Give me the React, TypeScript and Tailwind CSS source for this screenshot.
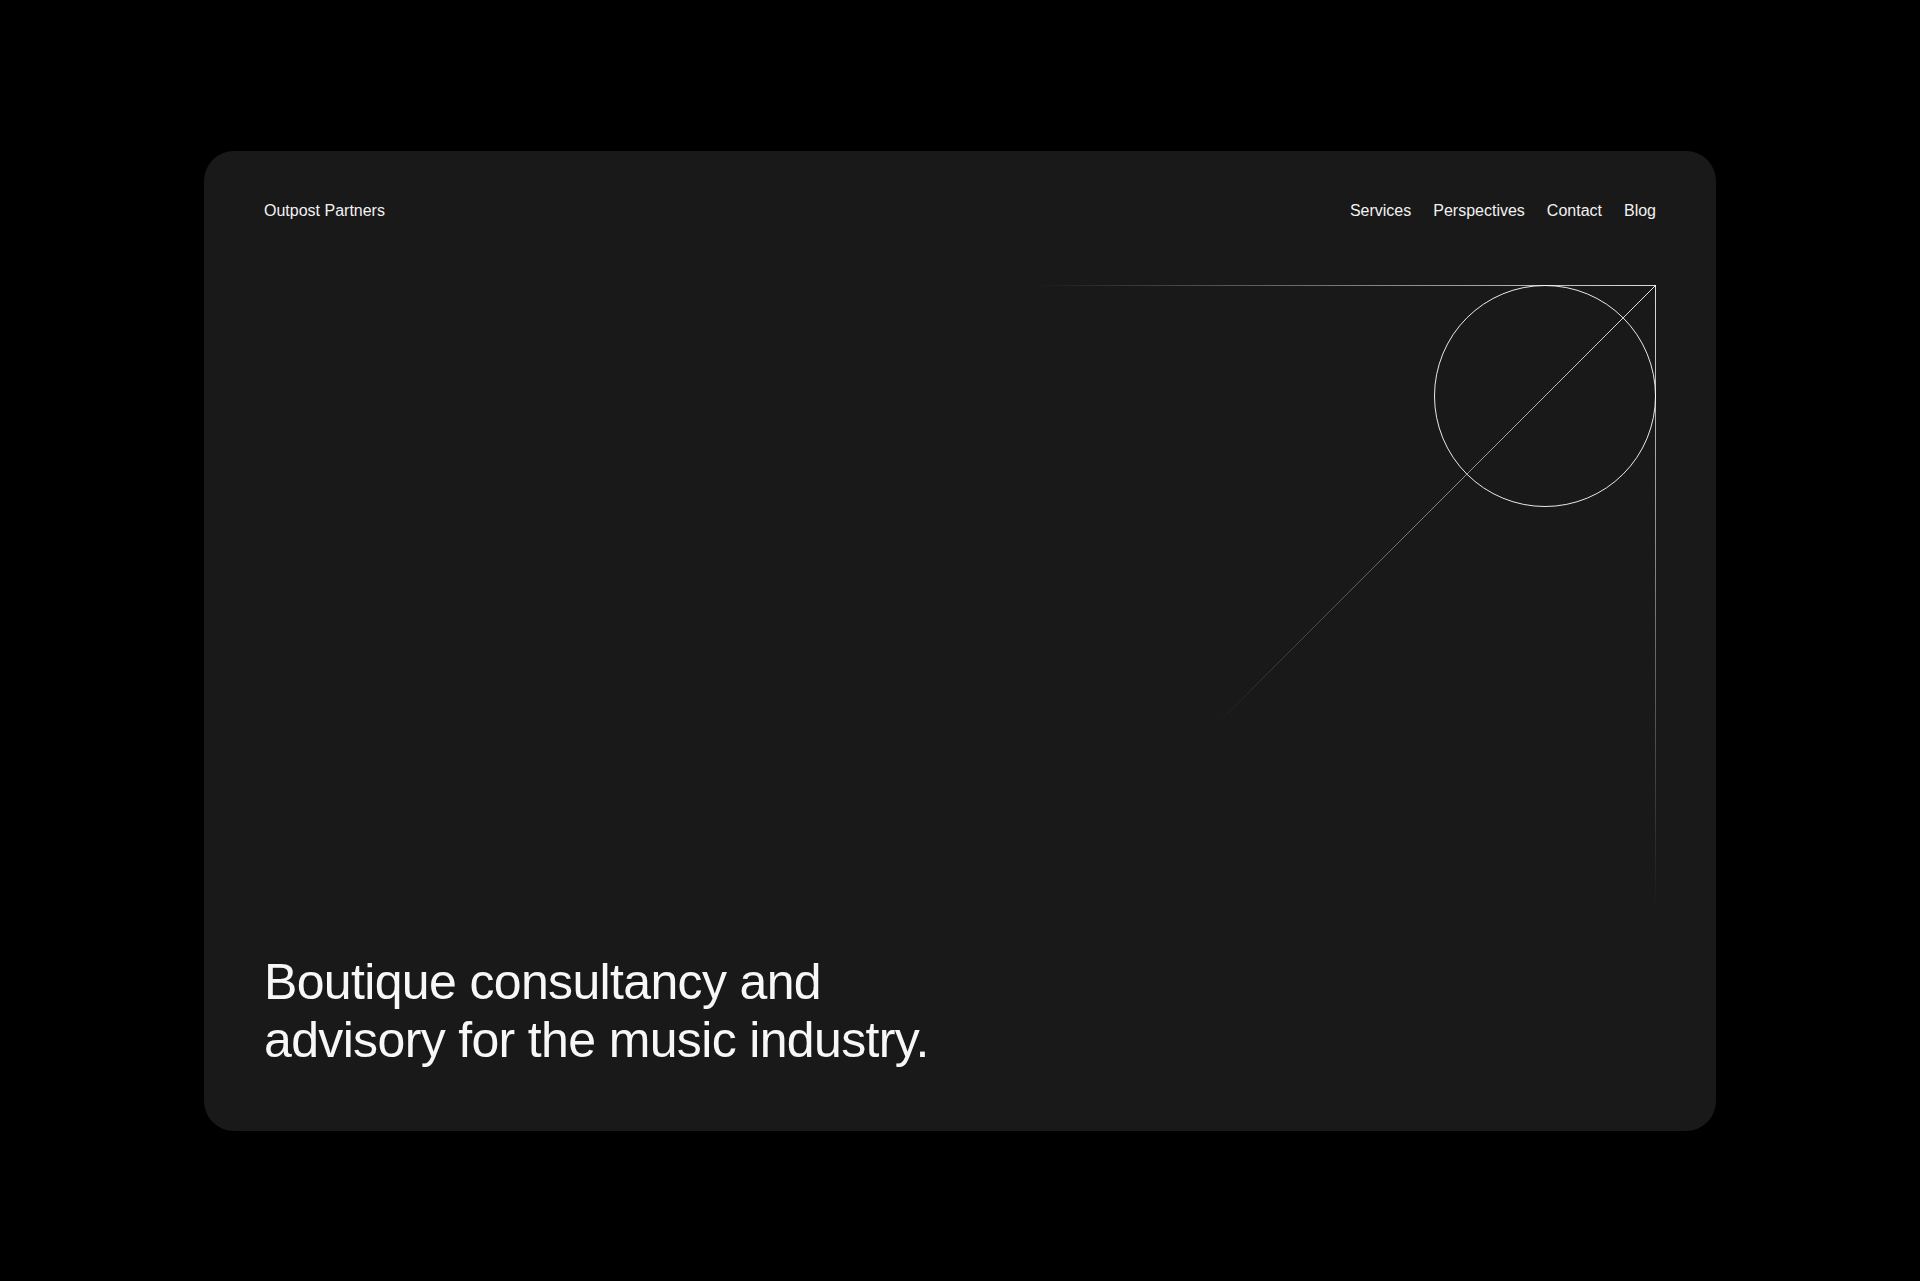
import React from "react";

function Graphic() {
  return (
    <svg width="622" height="622" viewBox="0 0 622 622" fill="none" className="block">
      <defs>
        <linearGradient id="gh" gradientUnits="userSpaceOnUse" x1="0" y1="0" x2="622" y2="0">
          <stop offset="0" stopColor="#ffffff" stopOpacity="0" />
          <stop offset="1" stopColor="#ffffff" stopOpacity="0.85" />
        </linearGradient>
        <linearGradient id="gv" gradientUnits="userSpaceOnUse" x1="0" y1="0" x2="0" y2="622">
          <stop offset="0" stopColor="#ffffff" stopOpacity="0.85" />
          <stop offset="1" stopColor="#ffffff" stopOpacity="0" />
        </linearGradient>
        <linearGradient id="gd" gradientUnits="userSpaceOnUse" x1="622" y1="0" x2="180" y2="442">
          <stop offset="0" stopColor="#ffffff" stopOpacity="0.9" />
          <stop offset="0.85" stopColor="#ffffff" stopOpacity="0.15" />
          <stop offset="1" stopColor="#ffffff" stopOpacity="0" />
        </linearGradient>
      </defs>
      <line x1="0" y1="0.5" x2="622" y2="0.5" stroke="url(#gh)" strokeWidth="1" />
      <line x1="621.5" y1="0" x2="621.5" y2="622" stroke="url(#gv)" strokeWidth="1" />
      <line x1="622" y1="0" x2="180" y2="442" stroke="url(#gd)" strokeWidth="1" />
      <circle cx="511" cy="111" r="110.5" stroke="#ffffff" strokeOpacity="0.9" strokeWidth="1" />
    </svg>
  );
}

export default function App() {
  return (
    <div
      className="min-h-screen bg-black flex items-center justify-center"
      style={{ fontFamily: '"Liberation Sans", Arial, sans-serif' }}
    >
      <div className="w-[1512px] h-[980px] bg-[#191919] rounded-[30px] flex flex-col px-[60px] pt-12 pb-[62px]">
        <header className="flex items-center justify-between text-base leading-6 text-[#f2f2f2]">
          <a href="#" className="text-[16px]">Outpost Partners</a>
          <nav className="flex items-center gap-[22px] text-[16px]">
            <a href="#">Services</a>
            <a href="#">Perspectives</a>
            <a href="#">Contact</a>
            <a href="#">Blog</a>
          </nav>
        </header>
        <div className="mt-[62px] self-end">
          <Graphic />
        </div>
        <div className="flex-1" />
        <h1 className="text-[50px] leading-[58px] font-normal text-[#f7f7f7] tracking-[-0.65px]">
          Boutique consultancy and
          <br />
          advisory for the music industry.
        </h1>
      </div>
    </div>
  );
}
